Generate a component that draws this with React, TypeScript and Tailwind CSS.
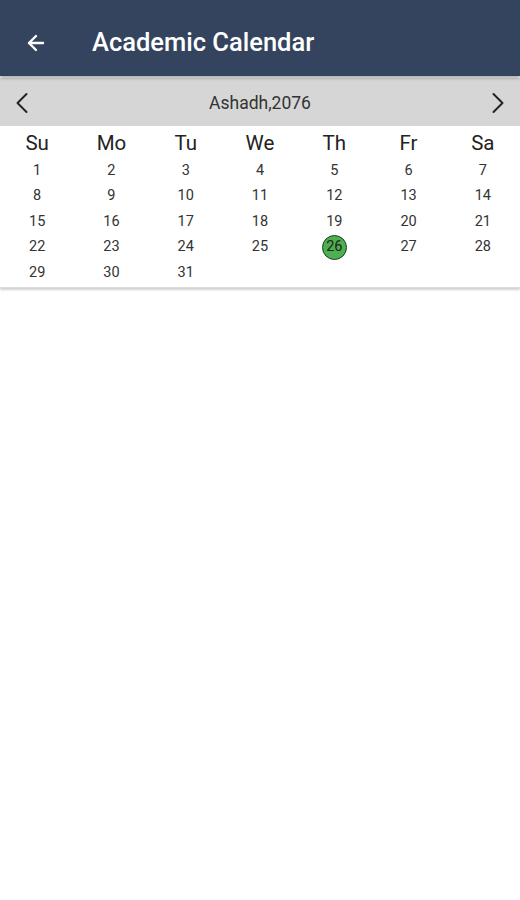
import { ArrowLeft, ChevronLeft, ChevronRight } from 'lucide-react';

const days = ['Su', 'Mo', 'Tu', 'We', 'Th', 'Fr', 'Sa'];
const today = 26;

export default function App() {
  const cells: (number | null)[] = Array.from({ length: 31 }, (_, i) => i + 1);
  while (cells.length < 35) cells.push(null);

  return (
    <div className="min-h-[900px] bg-white" style={{ fontFamily: 'Roboto, "Noto Sans", sans-serif' }}>
      <header className="h-[76px] bg-[#34445e] flex items-center pt-[9px] shadow-[0_2px_3px_rgba(0,0,0,0.35)] relative z-10">
        <ArrowLeft className="ml-[24px] h-[24px] w-[24px] text-white" strokeWidth={2.4} />
        <h1 className="ml-[44px] text-[25.5px] font-medium text-white">Academic Calendar</h1>
      </header>

      <div className="shadow-[0_2px_2px_rgba(0,0,0,0.18)] border-b border-[#dcdcdc]">
        <div className="mt-[2px] h-[48px] bg-[#d6d6d6] flex items-center justify-between px-[4px] pt-[2px]">
          <ChevronLeft className="h-[36px] w-[36px] text-[#222]" strokeWidth={1.3} />
          <span className="text-[17.5px] text-[#333]">Ashadh,2076</span>
          <ChevronRight className="h-[36px] w-[36px] text-[#222]" strokeWidth={1.3} />
        </div>

        <div className="grid grid-cols-7 pb-px">
          {days.map((d) => (
            <div key={d} className="h-[32px] pt-[3px] flex items-center justify-center text-[20.5px] text-[#222]">
              {d}
            </div>
          ))}
          {cells.map((n, i) => (
            <div key={i} className="h-[25.5px] flex items-center justify-center text-[14.5px] text-[#333]">
              {n === today ? (
                <span className="h-[25px] w-[25px] rounded-full bg-[#4caf50] border border-[#1f3d22] flex items-center justify-center text-[#222]">
                  {n}
                </span>
              ) : (
                n
              )}
            </div>
          ))}
        </div>
      </div>
    </div>
  );
}
